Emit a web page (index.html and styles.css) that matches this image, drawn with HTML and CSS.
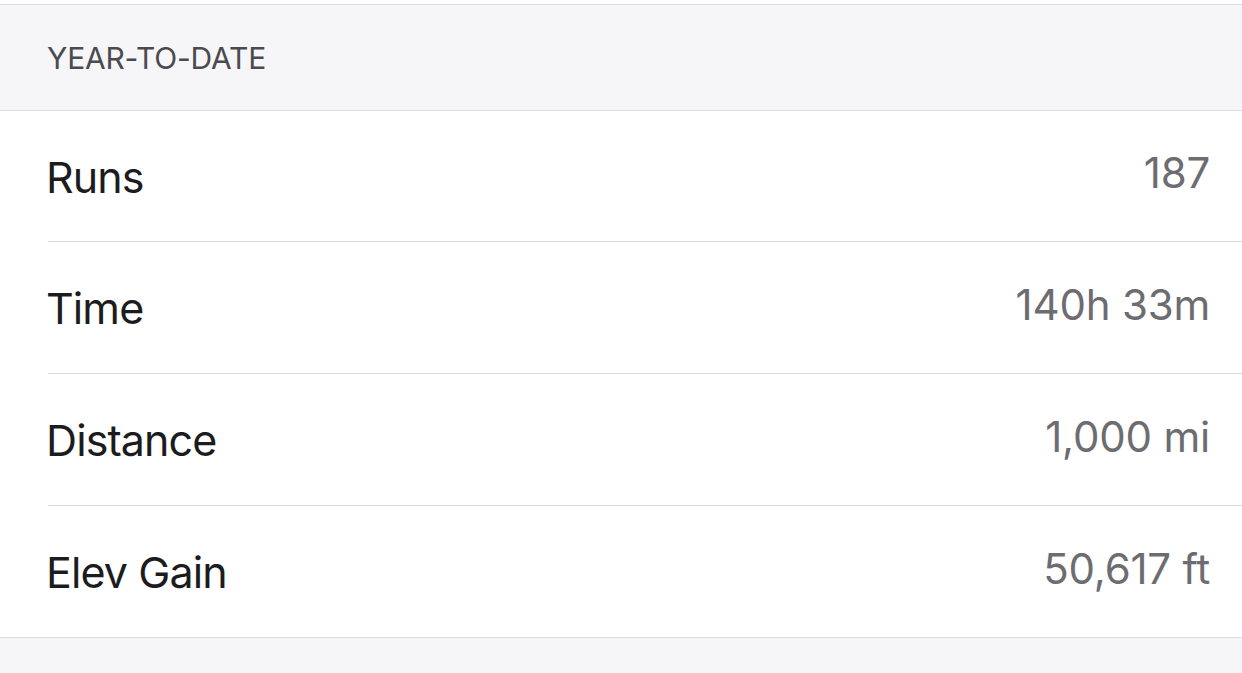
FILE: index.html
```html
<!DOCTYPE html>
<html>
<head>
<meta charset="utf-8">
<link rel="stylesheet" href="styles.css">
</head>
<body>
<div class="page">
  <div class="section-header">YEAR-TO-DATE</div>
  <ul class="list">
    <li class="row"><span class="label">Runs</span><span class="value">187</span></li>
    <li class="row"><span class="label">Time</span><span class="value">140h 33m</span></li>
    <li class="row"><span class="label">Distance</span><span class="value">1,000 mi</span></li>
    <li class="row"><span class="label">Elev Gain</span><span class="value">50,617 ft</span></li>
  </ul>
  <div class="footer"></div>
</div>
</body>
</html>
```
FILE: styles.css
```css
html, body {
  margin: 0;
  padding: 0;
  background: #ffffff;
}
body {
  font-family: Inter, "Liberation Sans", sans-serif;
  width: 1242px;
  height: 673px;
  overflow: hidden;
}
.page {
  padding-top: 4px;
}
.section-header {
  background: #f6f6f8;
  border-top: 1px solid #dedee0;
  border-bottom: 1px solid #dedee0;
  height: 107px;
  box-sizing: border-box;
  display: flex;
  align-items: center;
  padding-left: 47px;
  font-size: 30px;
  color: #4a4a4f;
  letter-spacing: -0.2px;
}
.list {
  list-style: none;
  margin: 0;
  padding: 0 0 0 48px;
  background: #ffffff;
}
.row {
  height: 132px;
  box-sizing: border-box;
  display: flex;
  align-items: center;
  justify-content: space-between;
  padding-right: 32px;
  border-bottom: 1px solid #dedee0;
}
.row:first-child {
  height: 131px;
}
.row:last-child {
  height: 131px;
  border-bottom: none;
}
.label {
  font-size: 43px;
  color: #1c1c1e;
  letter-spacing: -0.9px;
  margin-left: -2px;
  margin-top: 1px;
}
.value {
  font-size: 42px;
  color: #6c6c71;
  letter-spacing: -0.2px;
  margin-top: -7px;
}
.footer {
  border-top: 1px solid #dedee0;
  background: #f6f6f8;
  height: 40px;
}
```
